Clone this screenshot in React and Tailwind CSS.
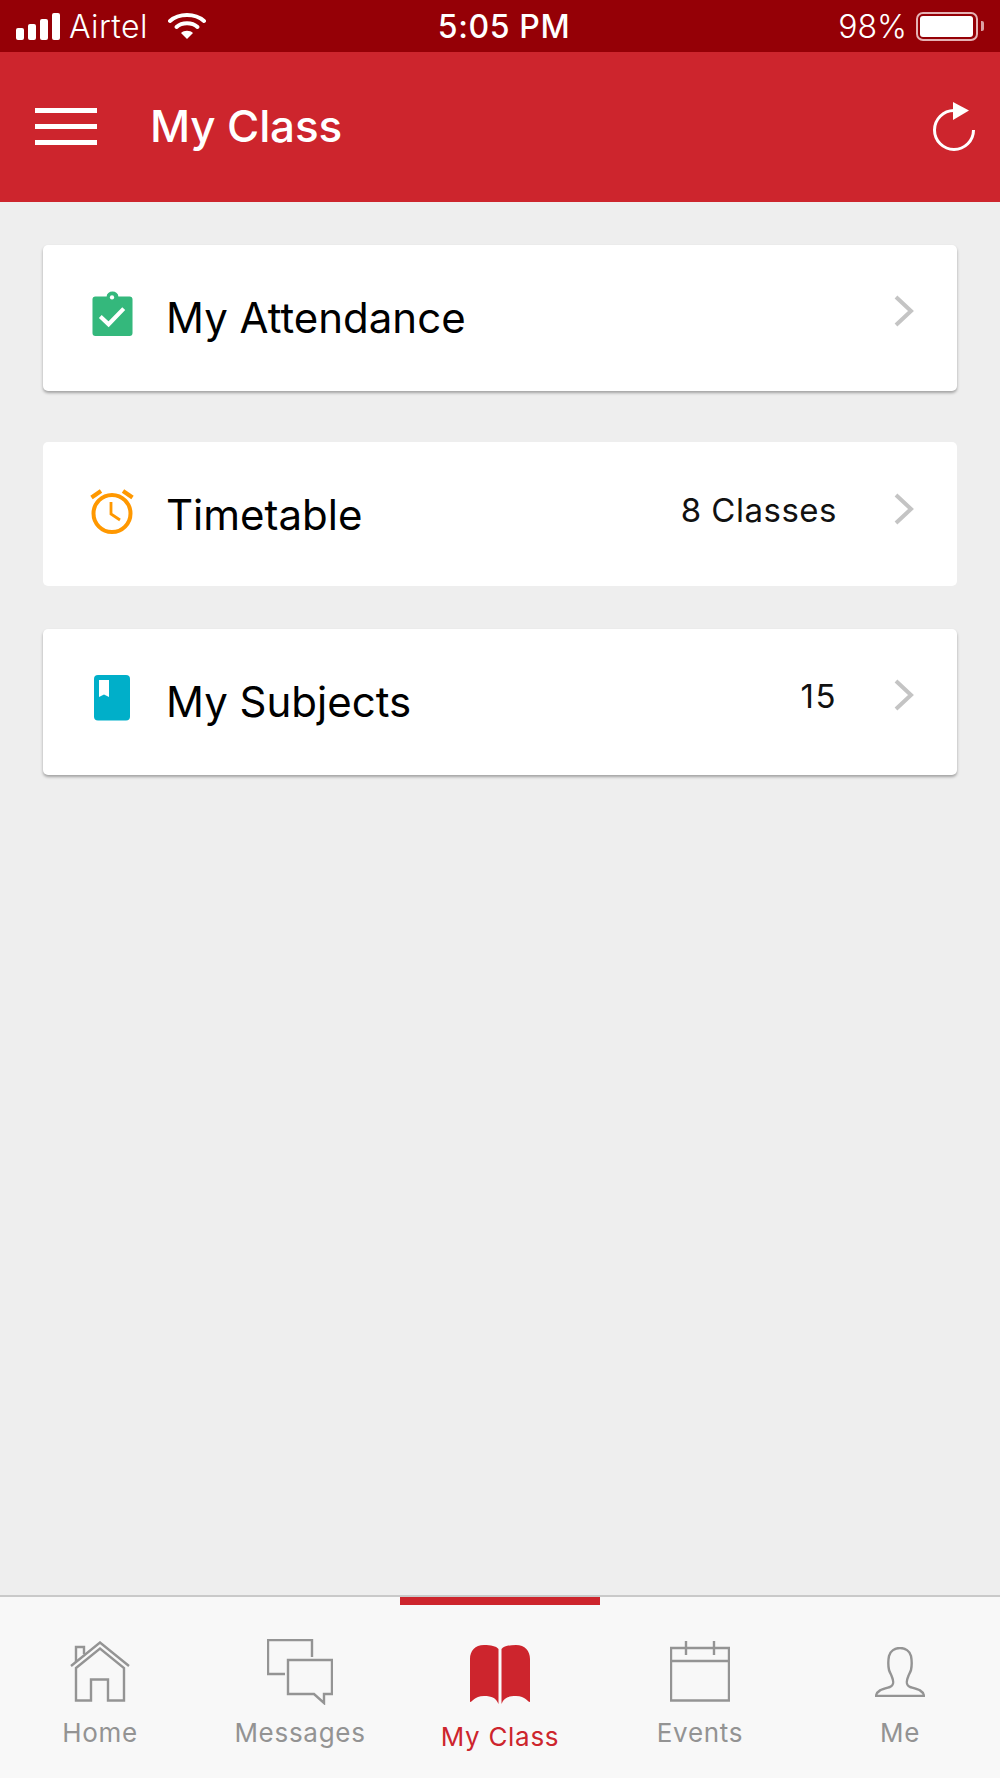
const font = { fontFamily: 'Inter, Roboto, sans-serif' };

function Chevron() {
  return (
    <svg width="22" height="34" viewBox="0 0 22 34" className="shrink-0">
      <path d="M3 3 L18 17 L3 31" fill="none" stroke="#c4c4c4" strokeWidth="4" />
    </svg>
  );
}

function Row({ icon, title, value, heightClass, shadow, titleClass, valueClass, chevClass }) {
  return (
    <div className={`flex items-start bg-white rounded-[5px] pl-[47px] pr-[42px] ${heightClass} ${shadow ? 'shadow-[0_2px_3px_rgba(0,0,0,0.32)]' : ''}`}>
      <div className="w-[44px] h-[50px] mt-[44px] flex items-center justify-center shrink-0">{icon}</div>
      <div className={`ml-[32px] flex-1 text-[42px] leading-[48px] text-black ${titleClass}`}>{title}</div>
      {value && <div className={`text-[33px] leading-[40px] text-[#111] ${valueClass}`}>{value}</div>}
      <div className={`ml-[56px] ${chevClass}`}><Chevron /></div>
    </div>
  );
}

function Tab({ label, icon, active }) {
  return (
    <div className="flex-1 flex flex-col items-center relative">
      {active && <div className="absolute left-0 right-0 top-0 h-[8px] bg-[#cd252d]" />}
      <div className="h-[72px] mt-[33px] flex items-end justify-center">{icon}</div>
      <div className={`${active ? 'text-[#cd252d] mt-[20px]' : 'text-[#939393] mt-[16px]'} text-[26px] leading-[30px] tracking-[0.7px]`}>{label}</div>
    </div>
  );
}

const S = '#949494';

export default function App() {
  return (
    <div className="w-[1000px] h-[1778px] flex flex-col bg-[#eeeeee] overflow-hidden" style={font}>
      <div className="h-[52px] bg-[#950006] flex items-center justify-between pl-[16px] pr-[16px] text-white shrink-0">
        <div className="flex items-center w-[300px]">
          <svg width="45" height="27" viewBox="0 0 45 27">
            <rect x="0" y="15" width="8" height="12" rx="2" fill="#fff" />
            <rect x="12" y="11" width="8" height="16" rx="2" fill="#fff" />
            <rect x="24" y="6" width="8" height="21" rx="2" fill="#fff" />
            <rect x="36" y="0" width="8" height="27" rx="2" fill="#fff" />
          </svg>
          <span className="ml-[8px] text-[32px] leading-[36px] font-light tracking-[0.4px] mt-[2px]">Airtel</span>
          <svg width="38" height="28" viewBox="0 0 38 28" className="ml-[20px]">
            <path d="M2 9 C11 1 27 1 36 9" fill="none" stroke="#fff" strokeWidth="4" strokeLinecap="round" />
            <path d="M8.500 15 C14 10 24 10 29.500 15" fill="none" stroke="#fff" strokeWidth="4" strokeLinecap="round" />
            <path d="M13 21 C16 18 22 18 25 21 L19 27 Z" fill="#fff" />
          </svg>
        </div>
        <div className="text-[32px] leading-[36px] font-medium tracking-[0.6px] ml-[8px] mt-[2px]">5:05 PM</div>
        <div className="flex items-center justify-end w-[300px]">
          <span className="text-[32px] leading-[36px] font-light mt-[2px]">98%</span>
          <div className="ml-[9px] w-[62px] h-[29px] rounded-[7px] border-2 border-[#e5b3b5] p-[2px] flex">
            <div className="flex-1 bg-white rounded-[3px] mr-[1px]" />
          </div>
          <div className="ml-[3px] w-[3px] h-[10px] rounded-r-[2px] bg-[#dba0a3]" />
        </div>
      </div>

      <div className="h-[150px] bg-[#cd252d] flex items-center pl-[35px] pr-[25px] shrink-0">
        <svg width="62" height="38" viewBox="0 0 62 38" className="shrink-0">
          <rect x="0" y="0" width="62" height="5" fill="#fff" />
          <rect x="0" y="16" width="62" height="5" fill="#fff" />
          <rect x="0" y="32" width="62" height="5" fill="#fff" />
        </svg>
        <div className="ml-[53px] flex-1 text-[44px] leading-[50px] font-medium text-white tracking-[-0.15px] mt-[-3px]">My Class</div>
        <svg width="44" height="50" viewBox="0 0 44 50" className="shrink-0 mt-[-3px]">
          <path d="M23 9.500 A19.500 19.500 0 1 0 42.500 29" fill="none" stroke="#fff" strokeWidth="3" />
          <path d="M22 1 L38 9.500 L22 19 Z" fill="#fff" />
        </svg>
      </div>

      <div className="flex-1 flex flex-col px-[43px] pt-[43px]">
        <Row
          heightClass="h-[146px]"
          shadow
          title="My Attendance"
          titleClass="mt-[49px]"
          chevClass="mt-[49px]"
          icon={
            <svg width="41" height="46" viewBox="0 0 42 46">
              <path d="M3.500 5 H15 A6 5 0 0 1 27 5 H38.500 A3 3 0 0 1 41.500 8 V42.500 A3 3 0 0 1 38.500 45.500 H3.500 A3 3 0 0 1 0.500 42.500 V8 A3 3 0 0 1 3.500 5 Z" fill="#34b87c" />
              <circle cx="20.500" cy="6" r="2.200" fill="#fff" />
              <path d="M8.500 25.500 L17 33.500 L32.500 17.500" fill="none" stroke="#fff" strokeWidth="4.200" />
            </svg>
          }
        />
        <div className="mt-[51px]">
          <Row
            heightClass="h-[144px]"
            title="Timetable"
            titleClass="mt-[49px]"
            value="8 Classes"
            valueClass="mt-[48px] tracking-[0.5px]"
            chevClass="mt-[50px]"
            icon={
              <svg width="44" height="46" viewBox="0 0 44 46">
                <circle cx="22" cy="25.500" r="18.500" fill="none" stroke="#ff9800" strokeWidth="4" />
                <path d="M21 14 V26 L30 32" fill="none" stroke="#ff9800" strokeWidth="2.800" />
                <path d="M1.500 9.500 L11 3" fill="none" stroke="#ff9800" strokeWidth="4.200" />
                <path d="M42.500 9.500 L33 3" fill="none" stroke="#ff9800" strokeWidth="4.200" />
              </svg>
            }
          />
        </div>
        <div className="mt-[43px]">
          <Row
            heightClass="h-[146px]"
            shadow
            title="My Subjects"
            titleClass="mt-[49px]"
            value="15"
            valueClass="mt-[47px] tracking-[1.5px]"
            chevClass="mt-[49px]"
            icon={
              <svg width="36" height="46" viewBox="0 0 36 46">
                <rect x="0" y="0" width="36" height="45.500" rx="4" fill="#00afc9" />
                <path d="M5 5 H15 V22 L10 19.500 L5 22 Z" fill="#fff" />
              </svg>
            }
          />
        </div>
      </div>

      <div className="h-[183px] shrink-0 bg-[#f8f8f8] border-t-2 border-[#c9c9c9] flex">
        <Tab
          label="Home"
          icon={
            <svg width="60" height="61" viewBox="0 0 60 61">
              <path d="M1 25 L30 1.500 L59 25" fill="none" stroke={S} strokeWidth="2.400" />
              <path d="M6 27 L30 7.500 L54 27 V59.500 H38 V38.500 H21 V59.500 H6 Z" fill="none" stroke={S} strokeWidth="2.400" />
              <path d="M6 21 V6 H14 V13" fill="none" stroke={S} strokeWidth="2.400" />
            </svg>
          }
        />
        <Tab
          label="Messages"
          icon={
            <svg width="66" height="66" viewBox="0 0 66 66" className="mb-[-3px]">
              <path d="M45 18 V1 H1 V35 H18" fill="none" stroke={S} strokeWidth="2.400" />
              <path d="M21 21 H65 V55 H57 V64 L47 55 H21 Z" fill="none" stroke={S} strokeWidth="2.400" />
            </svg>
          }
        />
        <Tab
          active
          label="My Class"
          icon={
            <svg width="62" height="62" viewBox="0 0 62 62" className="mb-[-4px]">
              <path d="M29.500 5 C27 2 22 1 15 1 C6 1 1 7 1 15 V58 C4 58 5 52 15 52 C23 52 27 54 29.500 60 Z" fill="#cd252d" />
              <path d="M32.500 5 C35 2 40 1 47 1 C56 1 61 7 61 15 V58 C58 58 57 52 47 52 C39 52 35 54 32.500 60 Z" fill="#cd252d" />
            </svg>
          }
        />
        <Tab
          label="Events"
          icon={
            <svg width="60" height="61" viewBox="0 0 60 61">
              <path d="M1 7 H59 V59.500 H1 Z M1 20 H59" fill="none" stroke={S} strokeWidth="2.400" />
              <path d="M16 0 V14 M44 0 V14" fill="none" stroke={S} strokeWidth="2.400" />
            </svg>
          }
        />
        <Tab
          label="Me"
          icon={
            <svg width="50" height="50" viewBox="0 0 50 50" className="mb-[5px]">
              <path d="M1 49 C2 43 8 42 15 40 C19 38 19 35 17 30 C16 27 15 26 14 23 C13 18 13 14 14 9 C15 4 20 1 25 1 C30 1 35 4 36 9 C37 14 37 18 36 23 C35 26 34 27 33 30 C31 35 31 38 35 40 C42 42 48 43 49 49 Z" fill="none" stroke={S} strokeWidth="2.400" />
            </svg>
          }
        />
      </div>
    </div>
  );
}
